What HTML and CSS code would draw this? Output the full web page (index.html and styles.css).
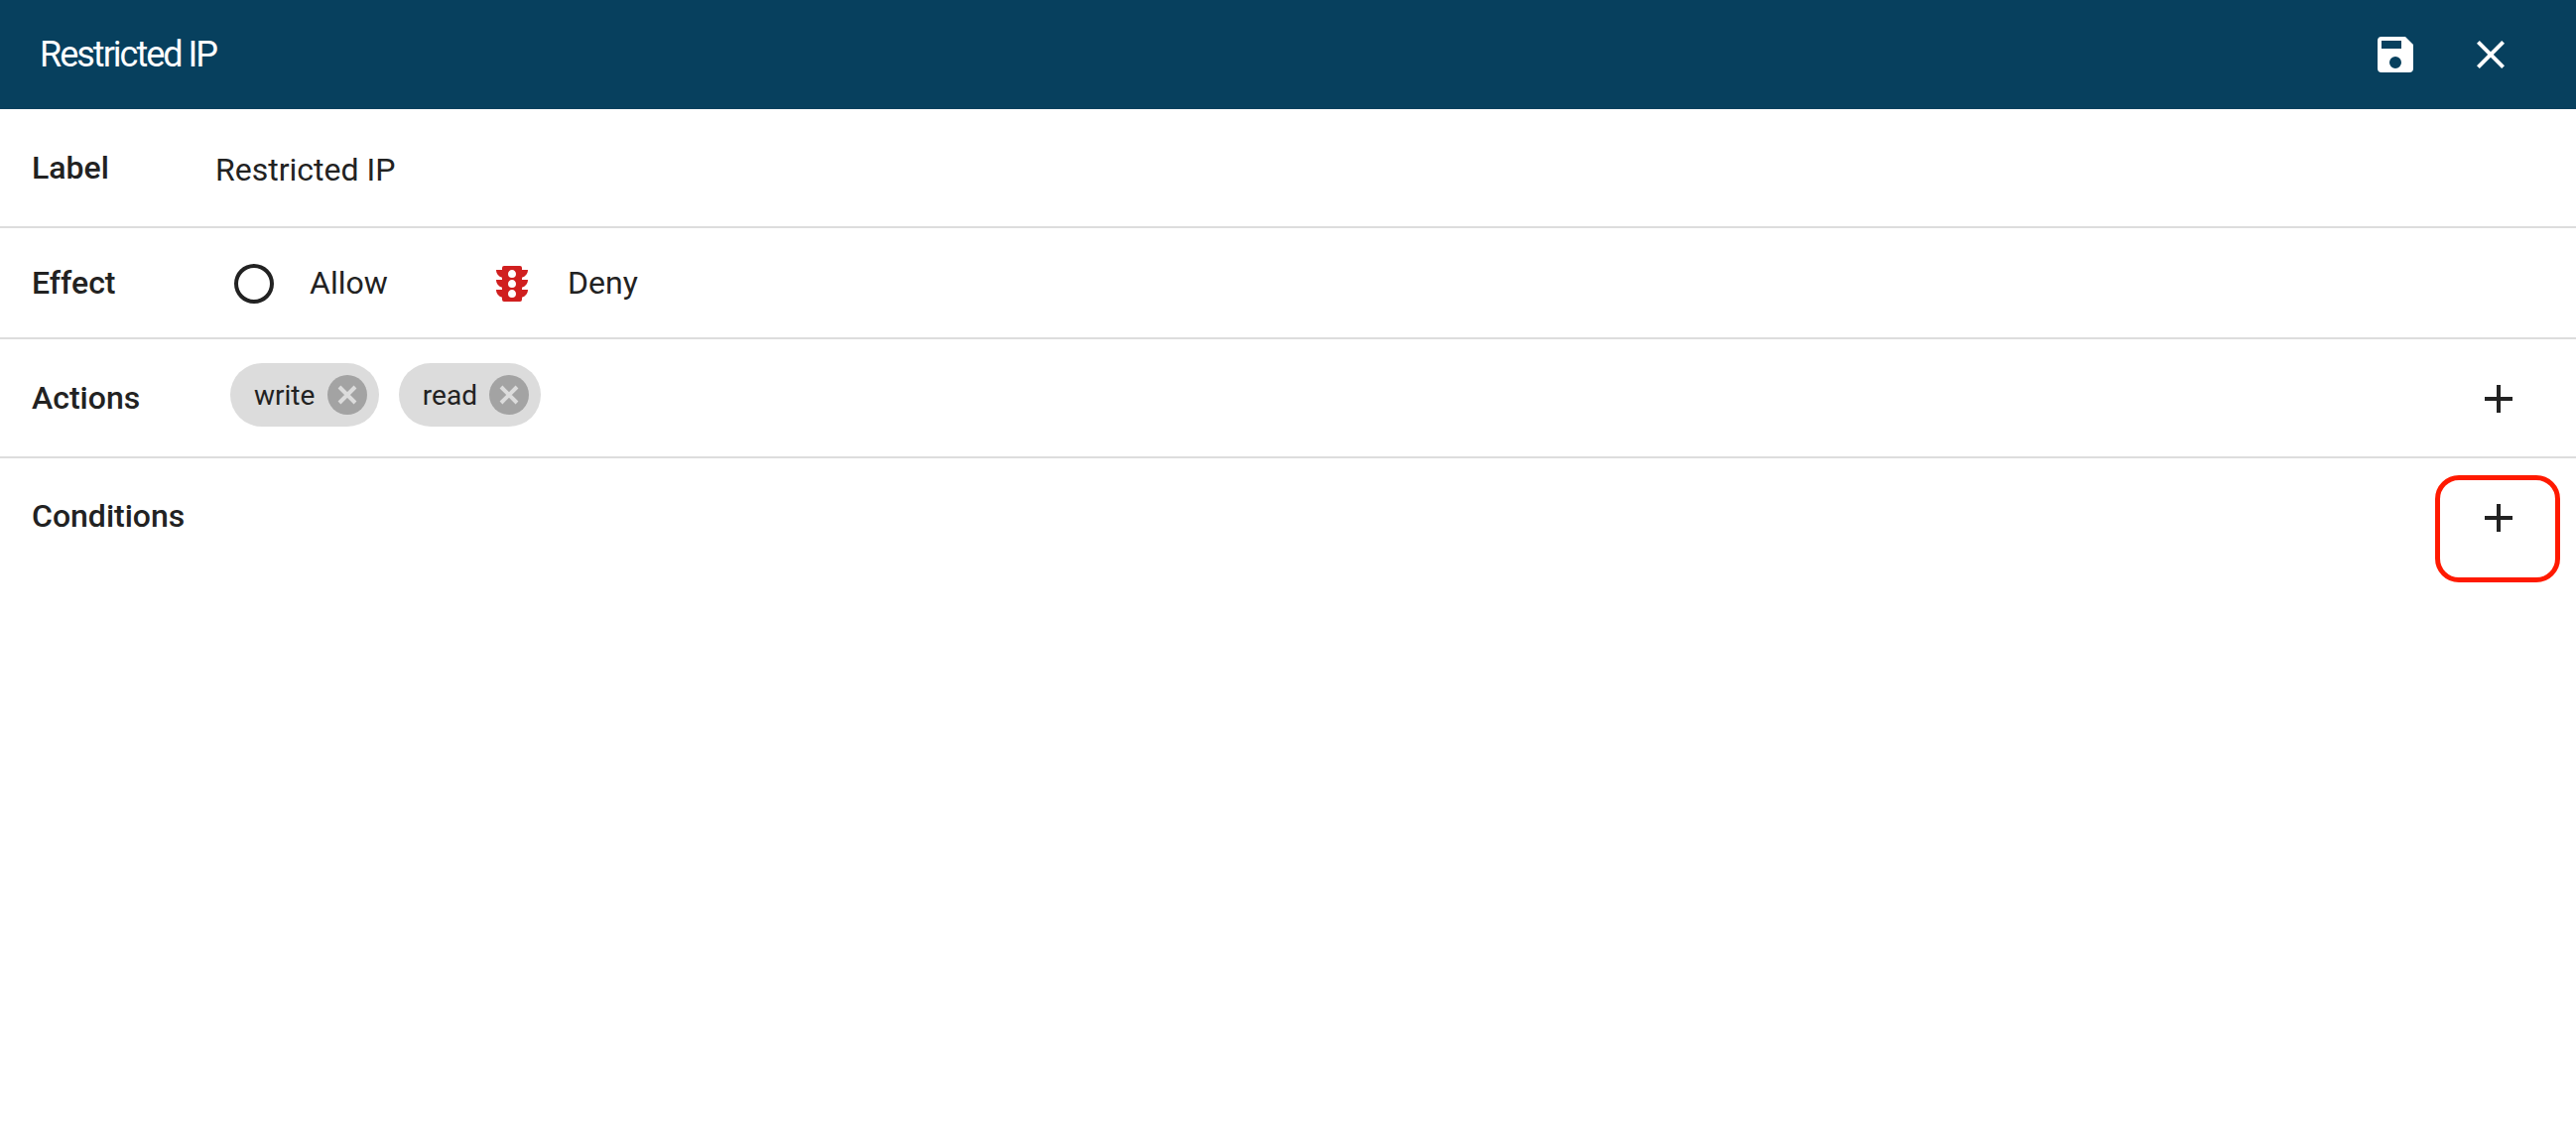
FILE: index.html
```html
<!DOCTYPE html>
<html lang="en">

<head>
    <meta charset="UTF-8">
    <meta name="viewport" content="width=device-width, initial-scale=1.0">
    <title>Restricted IP</title>
    <link rel="stylesheet" href="styles.css">
</head>

<body>
    <header class="toolbar">
        <h1 class="toolbar-title">Restricted IP</h1>
        <div class="toolbar-actions">
            <svg class="icon" viewBox="0 0 24 24"><path d="M15 9H5V5h10m-3 14a3 3 0 0 1-3-3 3 3 0 0 1 3-3 3 3 0 0 1 3 3 3 3 0 0 1-3 3m5-16H5a2 2 0 0 0-2 2v14a2 2 0 0 0 2 2h14a2 2 0 0 0 2-2V7l-4-4z"/></svg>
            <svg class="icon" viewBox="0 0 24 24"><path d="M19 6.41 17.59 5 12 10.59 6.41 5 5 6.41 10.59 12 5 17.59 6.41 19 12 13.41 17.59 19 19 17.59 13.41 12z"/></svg>
        </div>
    </header>

    <section class="row row-label">
        <span class="row-name">Label</span>
        <span class="row-value">Restricted IP</span>
    </section>

    <section class="row row-effect">
        <span class="row-name">Effect</span>
        <div class="options">
            <label class="option">
                <svg class="icon option-icon" viewBox="0 0 24 24"><path d="M12 20a8 8 0 0 1-8-8 8 8 0 0 1 8-8 8 8 0 0 1 8 8 8 8 0 0 1-8 8m0-18A10 10 0 0 0 2 12a10 10 0 0 0 10 10 10 10 0 0 0 10-10A10 10 0 0 0 12 2z"/></svg>
                Allow
            </label>
            <label class="option">
                <svg class="icon option-icon icon-deny" viewBox="0 0 24 24"><path d="M12,9A2,2 0 0,1 10,7C10,5.89 10.9,5 12,5C13.11,5 14,5.89 14,7A2,2 0 0,1 12,9M12,14A2,2 0 0,1 10,12C10,10.89 10.9,10 12,10C13.11,10 14,10.89 14,12A2,2 0 0,1 12,14M12,19A2,2 0 0,1 10,17C10,15.89 10.9,15 12,15C13.11,15 14,15.89 14,17A2,2 0 0,1 12,19M20,10H17V8.86C18.72,8.41 20,6.86 20,5H17V4A1,1 0 0,0 16,3H8A1,1 0 0,0 7,4V5H4C4,6.86 5.28,8.41 7,8.86V10H4C4,11.86 5.28,13.41 7,13.86V15H4C4,16.86 5.28,18.41 7,18.86V20A1,1 0 0,0 8,21H16A1,1 0 0,0 17,20V18.86C18.72,18.41 20,16.86 20,15H17V13.86C18.72,13.41 20,11.86 20,10Z"/></svg>
                Deny
            </label>
        </div>
    </section>

    <section class="row row-actions">
        <span class="row-name">Actions</span>
        <div class="chips">
            <span class="chip">write
                <svg class="chip-close" viewBox="0 0 40 40"><circle cx="20" cy="20" r="20"/><path d="M12 12l16 16m0-16l-16 16"/></svg>
            </span>
            <span class="chip">read
                <svg class="chip-close" viewBox="0 0 40 40"><circle cx="20" cy="20" r="20"/><path d="M12 12l16 16m0-16l-16 16"/></svg>
            </span>
        </div>
        <div class="add-button">
            <svg class="icon" viewBox="0 0 24 24"><path d="M19 13h-6v6h-2v-6H5v-2h6V5h2v6h6z"/></svg>
        </div>
    </section>

    <section class="row row-conditions">
        <span class="row-name">Conditions</span>
        <div class="add-button">
            <svg class="icon" viewBox="0 0 24 24"><path d="M19 13h-6v6h-2v-6H5v-2h6V5h2v6h6z"/></svg>
            <span class="highlight"></span>
        </div>
    </section>
</body>

</html>
```

FILE: styles.css
```css
html,
body {
    height: 100%;
}

body {
    margin: 0;
    min-height: 1138px;
    background-color: #fff;
    color: #222;
    font-family: Roboto, sans-serif;
    font-size: 32px;
}

.toolbar {
    display: flex;
    align-items: center;
    height: 110px;
    padding: 0 62px 0 40px;
    background-color: #07405e;
    color: #fff;
}

.toolbar-title {
    flex: 1;
    margin: 0;
    font-size: 36px;
    font-weight: 400;
    letter-spacing: -2px;
}

.toolbar-actions {
    display: flex;
    gap: 48px;
}

.icon {
    display: block;
    flex: none;
    width: 48px;
    height: 48px;
    fill: currentColor;
}

.icon-deny {
    fill: #d01f1f;
}

.row {
    display: flex;
    align-items: center;
    box-sizing: border-box;
    padding: 0 54px 0 32px;
    border-bottom: 2px solid #ddd;
}

.row-name {
    flex: none;
    width: 187px;
    font-weight: 500;
}

.row-value {
    margin-left: -2px;
    padding-top: 4px;
}

.row-label {
    height: 120px;
}

.row-effect {
    height: 112px;
}

.row-actions {
    height: 120px;
}

.row-conditions {
    align-items: flex-start;
    height: 200px;
    padding-top: 36px;
    border-bottom: 0;
}

.row-conditions .row-name {
    line-height: 45px;
}

.options {
    display: flex;
    padding-left: 13px;
}

.option {
    display: flex;
    align-items: center;
    gap: 32px;
    width: 260px;
}

.option-icon {
    margin-top: 2px;
}

.chips {
    display: flex;
    flex: 1;
    gap: 20px;
    padding-left: 13px;
    margin-top: -6px;
}

.chip {
    display: flex;
    align-items: center;
    gap: 12.5px;
    height: 64px;
    padding: 0 12px 0 24px;
    border-radius: 32px;
    background-color: #dcdcdc;
    font-size: 28px;
}

.chip-close {
    display: block;
    width: 40px;
    height: 40px;
}

.chip-close circle {
    fill: #a3a3a3;
}

.chip-close path {
    fill: none;
    stroke: #dcdcdc;
    stroke-width: 4;
}

.add-button {
    position: relative;
    margin-left: auto;
}

.row-actions .add-button {
    margin-top: 2px;
}

/* red box drawn round the add button */
.highlight {
    position: absolute;
    top: -19px;
    right: -38px;
    bottom: -41px;
    left: -40px;
    border: 5px solid #ff1a00;
    border-radius: 24px;
}
```
